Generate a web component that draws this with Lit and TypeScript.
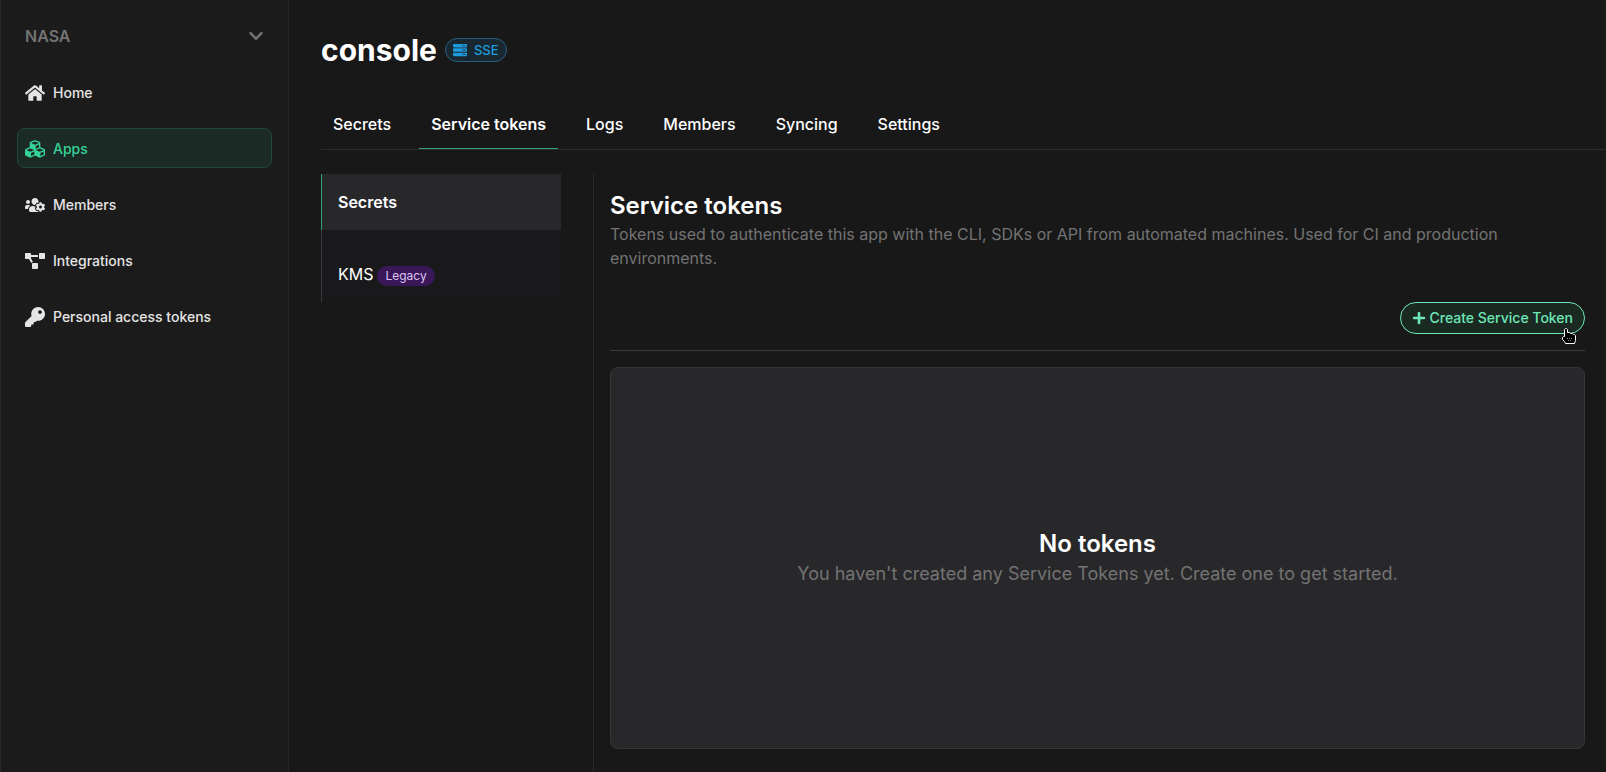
import { LitElement, html, css, svg } from "lit";
import { customElement, property } from "lit/decorators.js";
import { classMap } from "lit/directives/class-map.js";

const dot = "c-13.255 0-24 10.745-24 24s10.745 24 24 24 24-10.745 24-24-10.745-24-24-24z";
const bar = "H32c-17.673 0-32-14.327-32-32v-64c0-17.673 14.327-32 32-32h448c17.673 0 32 14.327 32 32v64c0 17.673-14.327 32-32 32z";

const ICONS: Record<string, { w: number; d: string }> = {
  home: {
    w: 576,
    d: "M280.37 148.26L96 300.11V464a16 16 0 0 0 16 16l112.06-.29a16 16 0 0 0 15.92-16V368a16 16 0 0 1 16-16h64a16 16 0 0 1 16 16v95.64a16 16 0 0 0 16 16.05L464 480a16 16 0 0 0 16-16V300L295.67 148.26a12.19 12.19 0 0 0-15.3 0zM571.6 251.47L488 182.56V44.05a12 12 0 0 0-12-12h-56a12 12 0 0 0-12 12v72.61L318.47 43a48 48 0 0 0-61 0L4.34 251.47a12 12 0 0 0-1.6 16.9l25.5 31A12 12 0 0 0 45.15 301l235.22-193.74a12.19 12.19 0 0 1 15.3 0L530.9 301a12 12 0 0 0 16.9-1.6l25.5-31a12 12 0 0 0-1.7-16.93z",
  },
  cubes: {
    w: 512,
    d: "M488.6 250.2L392 214V105.5c0-15-9.3-28.4-23.4-33.7l-100-37.5c-8.1-3.1-17.1-3.1-25.3 0l-100 37.5c-14.1 5.3-23.4 18.7-23.4 33.7V214l-96.6 36.2C9.3 255.5 0 268.9 0 283.9V394c0 13.6 7.7 26.1 19.9 32.2l100 50c10.1 5.1 22.1 5.1 32.2 0l103.9-52 103.9 52c10.1 5.1 22.1 5.1 32.2 0l100-50c12.2-6.1 19.9-18.6 19.9-32.2V283.9c0-15-9.3-28.4-23.4-33.7zM358 214.8l-85 31.9v-68.2l85-37v73.3zM154 104.1l102-38.2 102 38.2v.6l-102 41.4-102-41.4v-.6zm84 291.1l-85 42.5v-79.1l85-38.8v75.4zm0-112l-102 41.4-102-41.4v-.6l102-38.2 102 38.2v.6zm240 112l-85 42.5v-79.1l85-38.8v75.4zm0-112l-102 41.4-102-41.4v-.6l102-38.2 102 38.2v.6z",
  },
  members: {
    w: 640,
    d: "M610.5 341.3c2.6-14.1 2.6-28.5 0-42.6l25.8-14.9c3-1.7 4.3-5.2 3.3-8.5-6.7-21.6-18.2-41.2-33.2-57.4-2.3-2.5-6-3.1-9-1.4l-25.8 14.9c-10.9-9.3-23.4-16.5-36.9-21.3v-29.8c0-3.4-2.4-6.4-5.7-7.1-22.3-5-45-4.8-66.2 0-3.3.7-5.7 3.7-5.7 7.1v29.8c-13.5 4.8-26 12-36.9 21.3l-25.8-14.9c-2.9-1.7-6.7-1.1-9 1.4-15 16.2-26.5 35.8-33.2 57.4-1 3.3.4 6.8 3.3 8.5l25.8 14.9c-2.6 14.1-2.6 28.5 0 42.6l-25.8 14.9c-3 1.7-4.3 5.2-3.3 8.5 6.7 21.6 18.2 41.1 33.2 57.4 2.3 2.5 6 3.1 9 1.4l25.8-14.9c10.9 9.3 23.4 16.5 36.9 21.3v29.8c0 3.4 2.4 6.4 5.7 7.1 22.3 5 45 4.8 66.2 0 3.3-.7 5.7-3.7 5.7-7.1v-29.8c13.5-4.8 26-12 36.9-21.3l25.8 14.9c2.9 1.7 6.7 1.1 9-1.4 15-16.2 26.5-35.8 33.2-57.4 1-3.3-.4-6.8-3.3-8.5l-25.8-14.9zM496 368.5c-26.8 0-48.5-21.8-48.5-48.5s21.8-48.5 48.5-48.5 48.5 21.8 48.5 48.5-21.7 48.5-48.5 48.5zM96 224c35.3 0 64-28.7 64-64s-28.7-64-64-64-64 28.7-64 64 28.7 64 64 64zm224 32c1.9 0 3.7-.5 5.6-.6 8.3-21.7 20.5-42.1 36.3-59.2 7.4-8 17.9-12.6 28.9-12.6 6.9 0 13.7 1.8 19.6 5.3l7.9 4.6c.8-.5 1.6-.9 2.4-1.4 7-14.6 11.2-30.8 11.2-48 0-61.9-50.1-112-112-112S208 82.1 208 144c0 61.9 50.1 112 112 112zm105.2 194.5c-2.3-1.2-4.6-2.6-6.8-3.9-8.2 4.8-15.3 9.8-27.5 9.8-10.9 0-21.4-4.6-28.9-12.6-18.3-19.8-32.3-43.9-40.2-69.6-10.7-34.5 24.9-49.7 25.8-50.3-.1-2.6-.1-5.2 0-7.8l-7.9-4.6c-3.8-2.2-7-5-9.8-8.1-3.3.2-6.5.6-9.8.6-24.6 0-47.6-6-68.5-16h-8.3C179.6 288 128 339.6 128 403.2V432c0 26.5 21.5 48 48 48h255.4c-3.7-6-6.2-12.8-6.2-20.3v-9.2zM173.1 274.6C161.5 263.1 145.6 256 128 256H64c-35.3 0-64 28.7-64 64v32c0 17.7 14.3 32 32 32h65.9c6.3-47.4 34.9-87.3 75.2-109.4z",
  },
  diagram: {
    w: 640,
    d: "M384 320H256c-17.67 0-32 14.33-32 32v128c0 17.67 14.33 32 32 32h128c17.67 0 32-14.33 32-32V352c0-17.67-14.33-32-32-32zM192 32c0-17.67-14.33-32-32-32H32C14.33 0 0 14.33 0 32v128c0 17.67 14.33 32 32 32h95.72l73.16 128.04C211.98 300.98 232.4 288 256 288h.28L192 175.51V128h224V64H192V32zM608 0H480c-17.67 0-32 14.33-32 32v128c0 17.67 14.33 32 32 32h128c17.67 0 32-14.33 32-32V32c0-17.67-14.33-32-32-32z",
  },
  key: {
    w: 512,
    d: "M512 176.001C512 273.203 433.202 352 336 352c-11.22 0-22.19-1.062-32.827-3.069l-24.012 27.014A23.999 23.999 0 0 1 261.223 384H224v40c0 13.255-10.745 24-24 24h-40v40c0 13.255-10.745 24-24 24H24c-13.255 0-24-10.745-24-24v-78.059c0-6.365 2.529-12.47 7.029-16.971l161.802-161.802C163.108 213.814 160 195.271 160 176 160 78.798 238.797.001 335.999 0 433.488-.001 512 78.511 512 176.001zM336 128c0 26.51 21.49 48 48 48s48-21.49 48-48-21.49-48-48-48-48 21.49-48 48z",
  },
  plus: {
    w: 448,
    d: "M416 208H272V64c0-17.67-14.33-32-32-32h-32c-17.67 0-32 14.33-32 32v144H32c-17.67 0-32 14.33-32 32v32c0 17.67 14.33 32 32 32h144v144c0 17.67 14.33 32 32 32h32c17.67 0 32-14.33 32-32V304h144c17.67 0 32-14.33 32-32v-32c0-17.67-14.33-32-32-32z",
  },
  chevron: {
    w: 448,
    d: "M207.029 381.476L12.686 187.132c-9.373-9.373-9.373-24.569 0-33.941l22.667-22.667c9.357-9.357 24.522-9.375 33.901-.04L224 284.505l154.745-154.021c9.379-9.335 24.544-9.317 33.901.04l22.667 22.667c9.373 9.373 9.373 24.569 0 33.941L240.971 381.476c-9.373 9.372-24.569 9.372-33.942 0z",
  },
  server: {
    w: 512,
    d: [160, 320, 480].map((y) => `M480 ${y}${bar}M432 ${y - 88}${dot}M368 ${y - 88}${dot}`).join(""),
  },
};

@customElement("app-icon")
export class AppIcon extends LitElement {
  @property() name = "home";

  static styles = css`
    :host {
      display: inline-flex;
      flex: none;
    }
    .glyph {
      width: 100%;
      height: 100%;
      fill: currentColor;
    }
  `;

  render() {
    const icon = ICONS[this.name];
    return html`<svg class="glyph" viewBox="0 0 ${icon.w} 512" aria-hidden="true">
      ${svg`<path fill-rule="evenodd" d=${icon.d}></path>`}
    </svg>`;
  }
}

const NAV = [
  { label: "Home", icon: "home" },
  { label: "Apps", icon: "cubes", active: true },
  { label: "Members", icon: "members" },
  { label: "Integrations", icon: "diagram" },
  { label: "Personal access tokens", icon: "key" },
];

const TABS = ["Secrets", "Service tokens", "Logs", "Members", "Syncing", "Settings"];

@customElement("app-root")
export class AppRoot extends LitElement {
  static styles = css`
    :host {
      display: block;
      font-family: Inter, "Liberation Sans", sans-serif;
      font-size: 16px;
      line-height: 24px;
      color: #fff;
      background: #181818;
    }
    * {
      box-sizing: border-box;
    }
    a {
      color: inherit;
      text-decoration: none;
    }
    button {
      font: inherit;
      cursor: pointer;
    }
    h1,
    h2,
    h3,
    p {
      margin: 0;
    }
    .layout {
      display: grid;
      grid-template-columns: 289px minmax(0, 1fr);
      min-height: 100vh;
    }
    .sidebar {
      display: flex;
      flex-direction: column;
      gap: 16px;
      padding: 16px;
      background: #1b1b1b;
      border-left: 1px solid #262626;
      border-right: 1px solid #262626;
    }
    .org {
      display: flex;
      align-items: center;
      justify-content: space-between;
      height: 40px;
      padding: 0 8px;
      border: 0;
      background: none;
      color: #737373;
      font-weight: 600;
    }
    .org-icon {
      width: 16px;
      height: 16px;
    }
    .nav {
      display: flex;
      flex-direction: column;
      gap: 16px;
    }
    .nav-link {
      display: flex;
      align-items: center;
      gap: 8px;
      height: 40px;
      padding: 2px 7px 0;
      border: 1px solid transparent;
      border-radius: 8px;
      font-size: 14px;
      font-weight: 500;
      color: #e5e5e5;
    }
    .nav-link.active {
      color: #34d399;
      background: #1c2a25;
      border-color: #1e4a3a;
    }
    .nav-icon {
      width: 20px;
      height: 20px;
    }
    .main {
      display: flex;
      flex-direction: column;
      padding-left: 32px;
    }
    .header {
      display: flex;
      align-items: center;
      gap: 8px;
      padding-top: 32px;
    }
    .title {
      font-size: 30px;
      line-height: 36px;
      font-weight: 700;
    }
    .badge {
      display: flex;
      align-items: center;
      gap: 7px;
      height: 24px;
      padding: 0 7px;
      border: 1px solid #245f80;
      border-radius: 12px;
      background: #192830;
      color: #1d9bdd;
      font-size: 13px;
      font-weight: 500;
    }
    .badge-icon {
      width: 14px;
      height: 14px;
    }
    .tabs {
      display: flex;
      gap: 16px;
      margin-top: 32px;
      border-bottom: 1px solid #2c2c2c;
    }
    .tab {
      padding: 12px;
      font-weight: 500;
      border-bottom: 1px solid transparent;
    }
    .tab.active {
      font-weight: 600;
      border-color: #34a17b;
    }
    .body {
      display: flex;
      flex: 1;
      gap: 32px;
      padding-top: 24px;
    }
    .menu {
      flex: none;
      width: 240px;
    }
    .menu-link {
      display: flex;
      align-items: baseline;
      gap: 4px;
      padding: 16px;
      border-left: 1px solid #3a3a3c;
    }
    .menu-link.active {
      font-weight: 600;
      background: #28282a;
      border-color: #34a17b;
    }
    .menu-link.kms {
      padding-top: 32px;
      background: #19191b;
    }
    .legacy {
      padding: 0 8px;
      border-radius: 10px;
      background: #3a1758;
      color: #dcc3f3;
      font-size: 12px;
      line-height: 20px;
    }
    .panel {
      display: flex;
      flex: 1;
      flex-direction: column;
      min-width: 0;
      padding: 16px 21px 23px 16px;
      border-left: 1px solid #2a2a2a;
    }
    .heading {
      font-size: 24px;
      line-height: 32px;
      font-weight: 600;
    }
    .muted {
      color: #737373;
    }
    .actions {
      display: flex;
      justify-content: flex-end;
      margin-top: 32px;
      padding-bottom: 16px;
      border-bottom: 1px solid #3a3a3c;
    }
    .create {
      position: relative;
      display: flex;
      align-items: center;
      gap: 4px;
      height: 32px;
      padding: 0 11px;
      border: 1px solid #6ee7b7;
      border-radius: 16px;
      background: #1a2922;
      color: #6ee7b7;
      font-size: 14px;
      font-weight: 500;
    }
    .create-icon {
      width: 14px;
      height: 14px;
    }
    .pointer {
      position: absolute;
      right: 8px;
      bottom: -11px;
      width: 15px;
      height: 16px;
    }
    .empty {
      display: flex;
      flex: 1;
      flex-direction: column;
      align-items: center;
      justify-content: center;
      margin-top: 16px;
      padding: 32px;
      border: 1px solid #363638;
      border-radius: 8px;
      background: #28282a;
      text-align: center;
    }
    .empty-text {
      font-size: 18px;
      line-height: 28px;
      color: #737373;
    }
  `;

  render() {
    return html`
      <div class="layout">
        <aside class="sidebar">
          <button class="org" type="button">
            NASA<app-icon class="org-icon" name="chevron"></app-icon>
          </button>
          <nav class="nav" aria-label="Main">
            ${NAV.map(
              (item) => html`<a href="#" class=${classMap({ "nav-link": true, active: !!item.active })}>
                <app-icon class="nav-icon" name=${item.icon}></app-icon>${item.label}
              </a>`,
            )}
          </nav>
        </aside>
        <main class="main">
          <header class="header">
            <h1 class="title">console</h1>
            <span class="badge"><app-icon class="badge-icon" name="server"></app-icon>SSE</span>
          </header>
          <nav class="tabs" aria-label="App">
            ${TABS.map(
              (tab) => html`<a href="#" class=${classMap({ tab: true, active: tab === "Service tokens" })}>${tab}</a>`,
            )}
          </nav>
          <div class="body">
            <nav class="menu" aria-label="Token types">
              <a href="#" class="menu-link active">Secrets</a>
              <a href="#" class="menu-link kms">KMS<span class="legacy">Legacy</span></a>
            </nav>
            <section class="panel">
              <h2 class="heading">Service tokens</h2>
              <p class="muted">
                Tokens used to authenticate this app with the CLI, SDKs or API from automated machines. Used for CI and
                production environments.
              </p>
              <div class="actions">
                <button class="create" type="button">
                  <app-icon class="create-icon" name="plus"></app-icon>Create Service Token
                  <svg class="pointer" viewBox="0 0 15 16" aria-hidden="true">
                    <path
                      d="M3.5 8.5v-7l1-1h1l1 1v3h2l1 1h2l1 1h1l1 1v5l-1 3h-9l-1-2-2-2v-2l1-1h1z"
                      fill="#000"
                      stroke="#fff"
                      stroke-linejoin="round"
                    ></path>
                    <path
                      d="M6 10h1v1H6zM8 10h1v1H8zM10 10h1v1h-1zM7 12h1v1H7zM9 12h1v1H9z"
                      fill="#8a8a8a"
                    ></path>
                  </svg>
                </button>
              </div>
              <div class="empty">
                <h3 class="heading">No tokens</h3>
                <p class="empty-text">You haven't created any Service Tokens yet. Create one to get started.</p>
              </div>
            </section>
          </div>
        </main>
      </div>
    `;
  }
}
